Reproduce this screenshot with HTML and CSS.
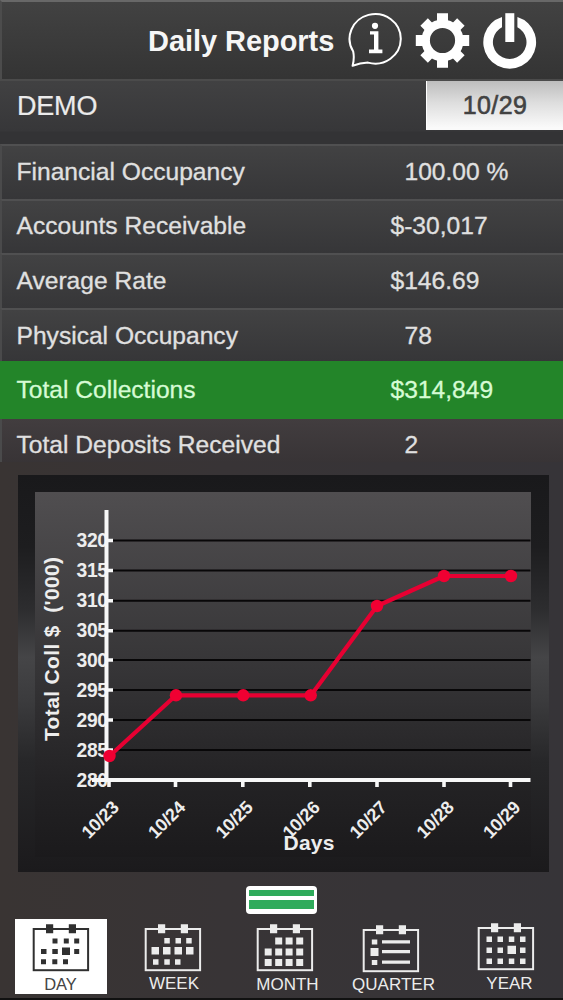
FILE: index.html
```html
<!DOCTYPE html>
<html lang="en">
<head>
<meta charset="utf-8">
<title>Daily Reports</title>
<link rel="stylesheet" href="styles.css">
</head>
<body>
<div class="app">
  <header class="topbar">
    <h1 class="title">Daily Reports</h1>
    <svg class="icon info" viewBox="348 12 54 57">
      <path d="M353.2 51.5A25.6 24.8 0 1 1 368 62.6Q360 63 352.6 65.8Q354.6 58.5 353.2 51.5Z" fill="none" stroke="#fff" stroke-width="2" stroke-linejoin="round"/>
      <circle cx="375" cy="25.8" r="3.1" fill="#fff"/>
      <path d="M370 31.2h8.4v18.4h4v3.6h-13.4v-3.6h5V34.6h-4z" fill="#fff"/>
    </svg>
    <svg class="icon gear" viewBox="415 12 55 57">
      <circle cx="442.5" cy="40.5" r="16.8" fill="none" stroke="#fff" stroke-width="8.4"/>
      <g fill="#fff">
        <path d="M437 13.3h11v9h-11zM437 58.8h11v9h-11zM415.8 35h9v11h-9zM460.2 35h9v11h-9z"/>
        <path d="M437.2 14.5h10.6v8.5h-10.6zM437.2 58h10.6v8.5h-10.6zM416.5 35.2h8.5v10.6h-8.5zM460 35.2h8.5v10.6h-8.5z" transform="rotate(45 442.5 40.5)"/>
      </g>
    </svg>
    <svg class="icon power" viewBox="482 12 55 57">
      <path d="M502 17A26.4 26.4 0 1 0 517.4 17V27.2A16.8 16.8 0 1 1 502 27.2Z" fill="#fff"/>
      <path d="M505.3 13.2h9v28.8h-9z" fill="#fff"/>
    </svg>
  </header>

  <section class="site">
    <span class="site-name">DEMO</span>
    <span class="date">10/29</span>
  </section>

  <main class="rows">
    <div class="row"><span class="label">Financial Occupancy</span><span class="value plain">100.00 %</span></div>
    <div class="row"><span class="label">Accounts Receivable</span><span class="value">$-30,017</span></div>
    <div class="row"><span class="label">Average Rate</span><span class="value">$146.69</span></div>
    <div class="row short"><span class="label">Physical Occupancy</span><span class="value plain">78</span></div>
    <div class="row active"><span class="label">Total Collections</span><span class="value">$314,849</span></div>
    <div class="row last"><span class="label">Total Deposits Received</span><span class="value plain">2</span></div>
  </main>

  <section class="chart">
    <svg class="plot" viewBox="18 475 531 397">
      <defs>
        <linearGradient id="panel" x1="0" y1="0" x2="0" y2="1">
          <stop offset="0" stop-color="#504e50"/><stop offset=".5" stop-color="#353436"/><stop offset=".8" stop-color="#232224"/><stop offset="1" stop-color="#1b1a1c"/>
        </linearGradient>
      </defs>
      <rect x="35" y="492" width="496" height="365" fill="url(#panel)"/>
      <path d="M109 540.5H530.5M109 570.5H530.5M109 600.7H530.5M109 630.7H530.5M109 660H530.5M109 690H530.5M109 720H530.5M109 750H530.5" stroke="#080708" stroke-width="2"/>
      <g class="tick">
        <text x="76.5" y="547.3">320</text><text x="76.5" y="577.3">315</text><text x="76.5" y="607.3">310</text>
        <text x="76.5" y="637.3">305</text><text x="76.5" y="666.7">300</text><text x="76.5" y="696.7">295</text>
        <text x="76.5" y="726.7">290</text><text x="76.5" y="756.7">285</text><text x="76.5" y="786.7">280</text>
      </g>
      <path d="M106.5 510V782M92 780H530.5" stroke="#f7f7f7" stroke-width="4"/>
      <path d="M107 540.5h6M107 570.5h6M107 600.7h6M107 630.7h6M107 660h6M107 690h6M107 720h6M107 750h6M109 781v6M175.5 781v6M242.8 781v6M309.8 781v6M377 781v6M444 781v6M510.5 781v6" stroke="#f7f7f7" stroke-width="3.6"/>
      <path d="M109.5 756L176 695.3H311L377 606L444 576H511" fill="none" stroke="#e70032" stroke-width="4.2" stroke-linejoin="round"/>
      <g fill="#f00032">
        <circle cx="109.5" cy="756" r="6.2"/><circle cx="176" cy="695.3" r="6.2"/><circle cx="243.2" cy="695.3" r="6.2"/><circle cx="310.7" cy="695.3" r="6.2"/><circle cx="377" cy="606" r="6.2"/><circle cx="444" cy="576" r="6.2"/><circle cx="511" cy="576" r="6.2"/>
      </g>
      <g class="day">
        <text transform="translate(89 839.5) rotate(-45)">10/23</text>
        <text transform="translate(155.5 839.5) rotate(-45)">10/24</text>
        <text transform="translate(223 839.5) rotate(-45)">10/25</text>
        <text transform="translate(290 839.5) rotate(-45)">10/26</text>
        <text transform="translate(357 839.5) rotate(-45)">10/27</text>
        <text transform="translate(424 839.5) rotate(-45)">10/28</text>
        <text transform="translate(490.5 839.5) rotate(-45)">10/29</text>
      </g>
      <text class="axis" x="283.5" y="849.5" textLength="51">Days</text>
      <text class="axis" transform="translate(59 741) rotate(-90)" textLength="184">Total Coll $&#160; ('000)</text>
    </svg>
  </section>

  <div class="handle"><i class="bar thin"></i><i class="bar"></i></div>

  <nav class="tabs">
    <div class="tab day-tab selected">
      <svg class="cal" viewBox="0 0 58 48"><use href="#frame"/><path d="M20.5 14.5h5v5h-5zM31.8 14.5h5v5h-5zM42.2 14.5h5v5h-5zM9 25h5.5v5H9zM20.3 25h5.5v5h-5.5zM30 23.5h8v7.5h-8zM42.2 25h5v5h-5zM9 35.3h5v5H9zM20.3 35.3h5v5h-5zM31 35.3h5v5h-5z"/></svg>
      <span class="name">DAY</span>
    </div>
    <div class="tab week-tab">
      <svg class="cal" viewBox="0 0 58 48"><use href="#frame"/><path d="M20.3 14h5.5v5.5h-5.5zM31.5 14h5.5v5.5h-5.5zM42.2 14h5.5v5.5h-5.5zM7.5 23h7.5v7.5H7.5zM19 23h7.5v7.5H19zM30.5 23h7.5v7.5h-7.5zM42 23h7.5v7.5H42zM9 35.3h5.5v5.5H9zM20.3 35.3h5.5v5.5h-5.5zM31 35.3h5.5v5.5H31z"/></svg>
      <span class="name">WEEK</span>
    </div>
    <div class="tab month-tab">
      <svg class="cal" viewBox="0 0 58 48"><use href="#frame"/><path d="M19.2 13.5h7v7h-7zM29.6 13.5h7v7h-7zM40.2 13.5h7v7h-7zM8.7 24.5h7v7h-7zM19.2 24.5h7v7h-7zM29.6 24.5h7v7h-7zM40.2 24.5h7v7h-7zM8.7 35h7v7h-7zM19.2 35h7v7h-7zM29.6 35h7v7h-7zM40.2 35h7v7h-7z"/></svg>
      <span class="name">MONTH</span>
    </div>
    <div class="tab quarter-tab">
      <svg class="cal" viewBox="0 0 58 48"><use href="#frame"/><path d="M9.8 14.5h5.5v5H9.8zM8.5 23h8v8h-8zM9.8 35h5.5v5H9.8zM20 15.3h28v3.2H20zM20 25h28v3.2H20zM20 35.5h28v3.2H20z"/></svg>
      <span class="name">QUARTER</span>
    </div>
    <div class="tab year-tab">
      <svg class="cal" viewBox="0 0 58 48"><use href="#frame"/><path d="M9.5 13.5h5.5v5.5H9.5zM20.5 13.5H26V19h-5.5zM31.8 13.5h5.5v5.5h-5.5zM43 13.5h5.5v5.5H43zM9.5 24.5h5.5V30H9.5zM20.5 24.5H26V30h-5.5zM30.5 22.8h8.5V31h-8.5zM43 24.5h5.5V30H43zM9.5 35.5h5.5V41H9.5zM20.5 35.5H26V41h-5.5zM31.8 35.5h5.5V41h-5.5zM43 35.5h5.5V41H43z"/></svg>
      <span class="name">YEAR</span>
    </div>
  </nav>
</div>
<svg class="defs">
  <defs>
    <g id="frame">
      <rect x="1.7" y="5" width="54.4" height="41.2" fill="none" stroke="currentColor" stroke-width="2"/>
      <path d="M14 .3h7.2v9H14zM36.8 .3H44v9h-7.2z"/>
    </g>
  </defs>
</svg>
</body>
</html>
```
FILE: styles.css
```css
* { box-sizing: border-box; }

body {
  margin: 0;
  background: #363438;
  font-family: "Liberation Sans", Arial, sans-serif;
}

.app {
  width: 563px;
  height: 1000px;
  display: flex;
  flex-direction: column;
  overflow: hidden;
  background: linear-gradient(90deg, #393433, #383436 40%, #363438);
  border-bottom: 2px solid #111;
}

.topbar {
  height: 79px;
  flex: none;
  display: flex;
  align-items: flex-start;
  padding: 10px 0 0 146px;
  border-top: 2px solid #686868;
  border-left: 2px solid #4c4c4c;
  background: linear-gradient(#424242, #343434);
}

.title {
  margin: 12px 0 0;
  width: 200px;
  font-size: 29px;
  line-height: 34px;
  letter-spacing: -0.05px;
  color: #f6f6f6;
  white-space: nowrap;
}

.icon { display: block; height: 57px; flex: none; }
.info { width: 54px; }
.gear { width: 55px; margin-left: 13px; }
.power { width: 55px; margin-left: 12px; }

.site {
  height: 65px;
  flex: none;
  display: flex;
  justify-content: space-between;
  align-items: flex-start;
  border-top: 2px solid #4b4b4b;
  background: linear-gradient(#414142, #373739 50px, #333335 51px);
}

.site-name {
  margin: 9px 0 0 17px;
  font-size: 27px;
  line-height: 32px;
  letter-spacing: -0.2px;
  color: #ebebeb;
  -webkit-text-stroke: 0.2px #ebebeb;
}

.date {
  width: 137px;
  height: 49px;
  padding-top: 1px;
  border-left: 1px solid #fff;
  background: linear-gradient(#bdbdbd, #dedede 45%, #fafafa 95%);
  color: #424242;
  font-size: 25px;
  line-height: 47px;
  text-align: center;
  letter-spacing: 0.4px;
  -webkit-text-stroke: 0.6px #424242;
}

.rows { flex: none; }

.row {
  height: 54.6px;
  display: flex;
  align-items: center;
  padding: 0 0 1px 14.5px;
  border-top: 2px solid #505051;
  border-left: 2px solid #4a4a4b;
  background: linear-gradient(#424243, #363638);
  color: #e0e0e0;
  font-size: 24.6px;
  line-height: 30px;
  white-space: nowrap;
  -webkit-text-stroke: 0.3px currentColor;
}

.label { width: 374px; }
.value.plain { padding-left: 14px; }
.row.short { height: 53.7px; padding-bottom: 0; }

.row.active {
  height: 57.5px;
  padding: 0 0 1px 16.5px;
  border: 0;
  background: #238529;
  color: #d6fbd4;
}

.row.last {
  height: 43px;
  padding-top: 10px;
  border-top: 0;
  background: linear-gradient(#423d3f, #383436);
}

.chart {
  width: 531px;
  height: 397px;
  flex: none;
  margin: 13px 0 0 18px;
  background: linear-gradient(#19191b, #1d1d1f 18%, #2d2d2f 34%, #454547 46%, #3b3b3d 57%, #272729 72%, #1b1a1c);
}

.plot { display: block; width: 531px; height: 397px; }
.plot text { font-weight: 700; fill: #ededed; }
.tick { font-size: 19.3px; letter-spacing: -0.3px; }
.day { font-size: 18px; letter-spacing: -0.3px; }
.axis { font-size: 21px; }

.handle {
  width: 71px;
  height: 28px;
  flex: none;
  margin: 14px 0 0 246px;
  padding: 4px 3px;
  border-radius: 4px;
  background: #fff;
  display: flex;
  flex-direction: column;
  gap: 4px;
}

.bar { height: 9px; background: #2fab5b; }
.bar.thin { height: 6px; }

.tabs {
  flex: none;
  margin-top: 5px;
  display: flex;
  color: #ececec;
}

.tab {
  width: 92px;
  height: 75px;
  flex: none;
  display: flex;
  flex-direction: column;
  align-items: center;
  padding-top: 5px;
}

.cal { width: 58px; height: 48px; fill: currentColor; display: block; flex: none; }
.name { font-size: 17px; line-height: 20px; margin-top: 2px; }

.day-tab { margin-left: 14.5px; }
.selected { background: #fff; color: #303030; }
.selected .name { color: #444; margin-top: 2px; font-size: 16.5px; }
.week-tab { margin-left: 20.5px; }
.week-tab .name { padding-left: 2px; }
.month-tab { margin-left: 20px; }
.month-tab .name { padding-left: 5px; margin-top: 3px; }
.quarter-tab { margin-left: 14px; padding-top: 6px; }
.quarter-tab .name { padding-left: 5px; margin-top: 2px; }
.year-tab { margin-left: 23px; padding-top: 4px; }
.year-tab .name { padding-left: 7px; margin-top: 3px; }

.defs { display: block; width: 0; height: 0; }
```
